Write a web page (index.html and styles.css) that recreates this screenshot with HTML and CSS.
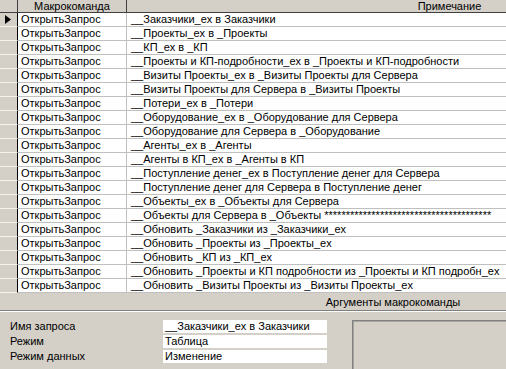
FILE: index.html
```html
<!DOCTYPE html>
<html>
<head>
<meta charset="utf-8">
<title>Макрос</title>
<link rel="stylesheet" href="styles.css">
</head>
<body>
    <div class="window">
        <div class="sheet">
            <div class="head sel-head"></div>
            <div class="head">Макрокоманда</div>
            <div class="head">Примечание</div>

            <div class="sel current"><svg width="6" height="9" viewBox="0 0 6 9"><polygon points="0,0 6,4.5 0,9" fill="#000"/></svg></div>
            <div class="cell">ОткрытьЗапрос</div><div class="cell note">__Заказчики_ex в Заказчики</div>
            <div class="sel"></div><div class="cell">ОткрытьЗапрос</div><div class="cell note">__Проекты_ex в _Проекты</div>
            <div class="sel"></div><div class="cell">ОткрытьЗапрос</div><div class="cell note">__КП_ex в _КП</div>
            <div class="sel"></div><div class="cell">ОткрытьЗапрос</div><div class="cell note">__Проекты и КП-подробности_ex в _Проекты и КП-подробности</div>
            <div class="sel"></div><div class="cell">ОткрытьЗапрос</div><div class="cell note">__Визиты Проекты_ex в _Визиты Проекты для Сервера</div>
            <div class="sel"></div><div class="cell">ОткрытьЗапрос</div><div class="cell note">__Визиты Проекты для Сервера в _Визиты Проекты</div>
            <div class="sel"></div><div class="cell">ОткрытьЗапрос</div><div class="cell note">__Потери_ex в _Потери</div>
            <div class="sel"></div><div class="cell">ОткрытьЗапрос</div><div class="cell note">__Оборудование_ex в _Оборудование для Сервера</div>
            <div class="sel"></div><div class="cell">ОткрытьЗапрос</div><div class="cell note">__Оборудование для Сервера в _Оборудование</div>
            <div class="sel"></div><div class="cell">ОткрытьЗапрос</div><div class="cell note">__Агенты_ex в _Агенты</div>
            <div class="sel"></div><div class="cell">ОткрытьЗапрос</div><div class="cell note">__Агенты в КП_ex в _Агенты в КП</div>
            <div class="sel"></div><div class="cell">ОткрытьЗапрос</div><div class="cell note">__Поступление денег_ex в Поступление денег для Сервера</div>
            <div class="sel"></div><div class="cell">ОткрытьЗапрос</div><div class="cell note">__Поступление денег для Сервера в Поступление денег</div>
            <div class="sel"></div><div class="cell">ОткрытьЗапрос</div><div class="cell note">__Объекты_ex в _Объекты для Сервера</div>
            <div class="sel"></div><div class="cell">ОткрытьЗапрос</div><div class="cell note">__Объекты для Сервера в _Объекты ***************************************</div>
            <div class="sel"></div><div class="cell">ОткрытьЗапрос</div><div class="cell note">__Обновить _Заказчики из _Заказчики_ex</div>
            <div class="sel"></div><div class="cell">ОткрытьЗапрос</div><div class="cell note">__Обновить _Проекты из _Проекты_ex</div>
            <div class="sel"></div><div class="cell">ОткрытьЗапрос</div><div class="cell note">__Обновить _КП из _КП_ex</div>
            <div class="sel"></div><div class="cell">ОткрытьЗапрос</div><div class="cell note">__Обновить _Проекты и КП подробности из _Проекты и КП подробн_ex</div>
            <div class="sel"></div><div class="cell">ОткрытьЗапрос</div><div class="cell note">__Обновить _Визиты Проекты из _Визиты Проекты_ex</div>
        </div>

        <div class="args-bar">
            <span class="args-title">Аргументы макрокоманды</span>
        </div>
        <div class="args">
            <div class="arg-list">
                <div class="arg-row"><span class="arg-label">Имя запроса</span><span class="arg-value">__Заказчики_ex в Заказчики</span></div>
                <div class="arg-row"><span class="arg-label">Режим</span><span class="arg-value">Таблица</span></div>
                <div class="arg-row"><span class="arg-label">Режим данных</span><span class="arg-value">Изменение</span></div>
            </div>
            <div class="help-box"></div>
        </div>
    </div>
</body>
</html>
```

FILE: styles.css
```css
body {
    margin: 0;
    background: #d4d0c8;
    font-family: "Liberation Sans", Arial, sans-serif;
    font-size: 11px;
    color: #000;
}
.window {
    width: 506px;
    height: 369px;
    overflow: hidden;
}
.sheet {
    display: grid;
    grid-template-columns: 18px 109px 646px;
    grid-template-rows: 13px;
    grid-auto-rows: 14px;
    width: 773px;
    background: #fff;
}
.head {
    box-sizing: border-box;
    background: #d4d0c8;
    border-right: 1px solid #404040;
    border-bottom: 1px solid #404040;
    text-align: center;
    line-height: 12px;
    white-space: nowrap;
}
.sel {
    box-sizing: border-box;
    background: #d4d0c8;
    border-right: 1px solid #000;
    border-bottom: 1px solid #f4f3ee;
    display: flex;
    align-items: center;
    padding-left: 5px;
}
.cell {
    box-sizing: border-box;
    border-right: 1px solid #c0c0c0;
    border-bottom: 1px solid #c0c0c0;
    line-height: 13px;
    padding-left: 3px;
    white-space: nowrap;
    overflow: hidden;
}
.note {
    padding-left: 4px;
}
.args-bar {
    height: 17px;
    display: flex;
    justify-content: flex-end;
    border-bottom: 1px solid #808080;
    box-shadow: 0 1px 0 #fff;
}
.args-title {
    width: 226px;
    text-align: center;
    line-height: 18px;
}
.args {
    display: flex;
    padding-top: 9px;
}
.arg-list {
    width: 327px;
}
.arg-row {
    display: flex;
    height: 13px;
    margin-bottom: 2px;
    line-height: 13px;
}
.arg-label {
    width: 153px;
    padding-left: 10px;
}
.arg-value {
    width: 162px;
    padding-left: 2px;
    background: #fff;
    white-space: nowrap;
    overflow: hidden;
}
.help-box {
    margin-left: 25px;
    flex: 1;
    height: 60px;
    border-top: 1px solid #808080;
    border-left: 1px solid #808080;
    box-shadow: inset 1px 1px 0 #a8a59e;
}
```
